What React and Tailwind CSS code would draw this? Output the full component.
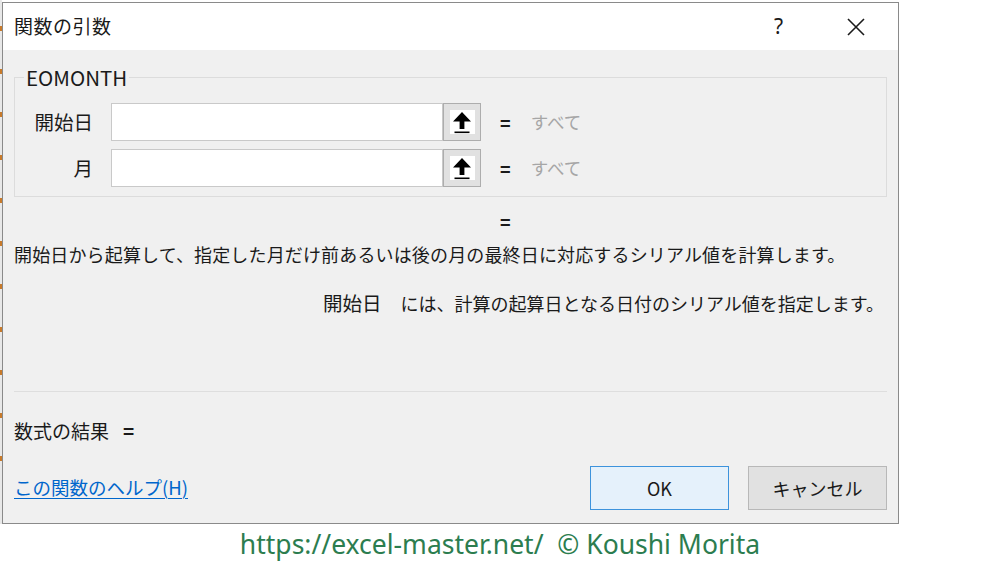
import React from "react";

const jp = { fontFamily: '"Noto Sans CJK JP", "Noto Sans", sans-serif' };

function RefButton() {
  return (
    <div className="w-[38px] h-[38px] bg-[#e1e1e1] border border-[#adadad] flex items-center justify-center">
      <div className="w-[25px] h-[24px] bg-white flex items-center justify-center">
        <svg width="22" height="23" viewBox="0 0 22 23">
          <polygon points="11,1 20,10.5 13.4,10.5 13.4,18 8.6,18 8.6,10.5 2,10.5" fill="#000" />
          <rect x="3.5" y="20.5" width="15" height="1.6" fill="#000" />
        </svg>
      </div>
    </div>
  );
}

function ArgRow({ label }) {
  return (
    <div className="flex items-center h-[38px]">
      <div className="w-[78px] text-right text-[19.5px] text-[#1a1a1a] leading-none">{label}</div>
      <div className="ml-[18px] w-[332px] h-[38px] bg-white border border-[#c9c9c9]" />
      <RefButton />
      <div className="ml-[19px] text-[18px] font-bold text-[#1a1a1a] leading-none">=</div>
      <div className="ml-[20px] text-[17.5px] text-[#a6a6a6] leading-none">すべて</div>
    </div>
  );
}

export default function App() {
  return (
    <div className="w-[1000px] h-[563px] bg-white overflow-hidden" style={jp}>
      <div className="flex">
        <div className="w-[2px] h-[524px] bg-[#e8e8e8] flex flex-col pt-[26px] gap-[38px]">
          {[0, 1, 2, 3, 4, 5, 6, 7, 8, 9, 10].map((i) => (
            <div key={i} className="w-[2px] h-[5px] bg-[#c87a2a]" />
          ))}
        </div>
        <div className="mt-[2px] w-[897px] h-[522px] border border-[#8a8a8a] flex flex-col">
          <div className="h-[47px] bg-white flex items-center pl-[11px] pr-[33px] shrink-0">
            <div className="text-[19px] text-[#1a1a1a] tracking-[0.5px]">関数の引数</div>
            <div className="ml-auto text-[21px] text-[#1a1a1a] leading-none" style={{ fontFamily: '"Noto Sans", sans-serif' }}>?</div>
            <svg className="ml-[64px]" width="18" height="18" viewBox="0 0 18 18">
              <path d="M1 1 L17 17 M17 1 L1 17" stroke="#1a1a1a" strokeWidth="1.6" />
            </svg>
          </div>
          <div className="flex-1 bg-[#f0f0f0] px-[11px] flex flex-col">
            <div className="mt-[27px] relative border border-[#dcdcdc] pt-[25px] pb-[9px] flex flex-col gap-[8px]">
              <span className="absolute left-[9px] -top-[14px] px-[2px] bg-[#f0f0f0] text-[20.5px] leading-[26px] text-[#1a1a1a]">EOMONTH</span>
              <ArgRow label="開始日" />
              <ArgRow label="月" />
            </div>
            <div className="mt-[12px] ml-[486px] h-[24px] text-[18px] font-bold leading-[24px] text-[#1a1a1a]">=</div>
            <div className="mt-[9px] h-[24px] text-[18px] leading-[24px] text-[#1a1a1a] whitespace-nowrap tracking-[0.15px]">
              開始日から起算して、指定した月だけ前あるいは後の月の最終日に対応するシリアル値を計算します。
            </div>
            <div className="mt-[25px] h-[24px] flex justify-end pr-[3px] text-[18px] leading-[24px] text-[#1a1a1a] whitespace-nowrap">
              <span className="text-[19.5px]">開始日</span>
              <span className="ml-[19px]">には、計算の起算日となる日付のシリアル値を指定します。</span>
            </div>
            <div className="mt-[76px] border-t border-[#dedede]" />
            <div className="mt-[27px] h-[24px] text-[18px] leading-[24px] text-[#1a1a1a] flex items-center">
              <span className="text-[19px]">数式の結果</span>
              <span className="ml-[14px] font-bold text-[19px]">=</span>
            </div>
            <div className="mt-[23px] flex items-center">
              <a className="text-[18.5px] text-[#0066cc] underline underline-offset-[3px]" href="#">この関数のヘルプ(H)</a>
              <button className="ml-auto w-[139px] h-[44px] bg-[#e5f1fb] border border-[#3d93dc] text-[18px] text-[#1a1a1a]">OK</button>
              <button className="ml-[19px] w-[139px] h-[44px] bg-[#e1e1e1] border border-[#b8b8b8] text-[18px] text-[#1a1a1a]">キャンセル</button>
            </div>
          </div>
        </div>
      </div>
      <div className="text-center text-[26.5px] leading-[30px] mt-[5px] text-[#2c7d4f] whitespace-pre" style={{ fontFamily: '"Noto Sans", sans-serif' }}>
        {"https://excel-master.net/  © Koushi Morita"}
      </div>
    </div>
  );
}
